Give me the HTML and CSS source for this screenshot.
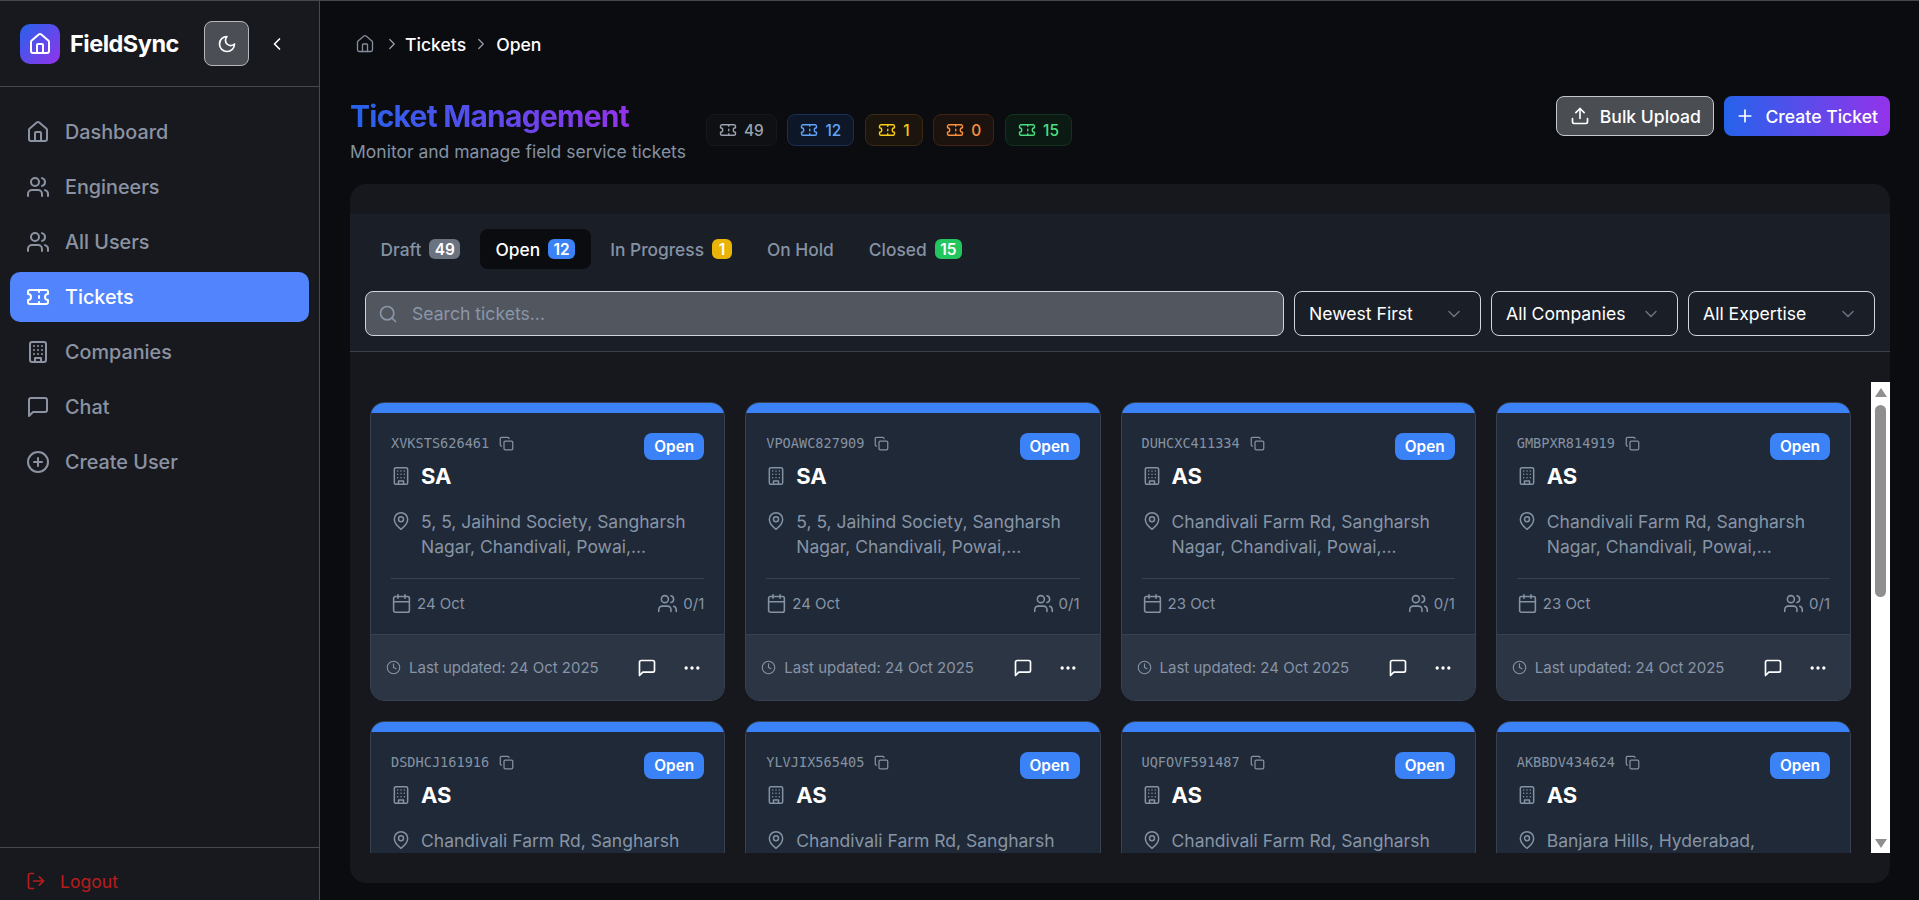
FILE: index.html
```html
<!DOCTYPE html>
<html lang="en">
<head>
    <meta charset="UTF-8">
    <meta name="viewport" content="width=device-width, initial-scale=1.0">
    <title>FieldSync - Tickets</title>
    <link rel="stylesheet" href="styles.css">
</head>
<body>

    <!-- Icon set -->
    <svg class="icon-defs" xmlns="http://www.w3.org/2000/svg">
        <symbol id="i-home" viewBox="0 0 24 24"><path d="M15 21v-8a1 1 0 0 0-1-1h-4a1 1 0 0 0-1 1v8"/><path d="M3 10a2 2 0 0 1 .709-1.528l7-5.999a2 2 0 0 1 2.582 0l7 5.999A2 2 0 0 1 21 10v9a2 2 0 0 1-2 2H5a2 2 0 0 1-2-2z"/></symbol>
        <symbol id="i-users" viewBox="0 0 24 24"><path d="M16 21v-2a4 4 0 0 0-4-4H6a4 4 0 0 0-4 4v2"/><circle cx="9" cy="7" r="4"/><path d="M22 21v-2a4 4 0 0 0-3-3.87"/><path d="M16 3.13a4 4 0 0 1 0 7.75"/></symbol>
        <symbol id="i-ticket" viewBox="0 0 24 24"><path d="M2 9a3 3 0 0 1 0 6v2a2 2 0 0 0 2 2h16a2 2 0 0 0 2-2v-2a3 3 0 0 1 0-6V7a2 2 0 0 0-2-2H4a2 2 0 0 0-2 2Z"/><path d="M13 5v2"/><path d="M13 17v2"/><path d="M13 11v2"/></symbol>
        <symbol id="i-building" viewBox="0 0 24 24"><rect width="16" height="20" x="4" y="2" rx="2"/><path d="M9 22v-4h6v4"/><path d="M8 6h.01"/><path d="M16 6h.01"/><path d="M12 6h.01"/><path d="M12 10h.01"/><path d="M12 14h.01"/><path d="M16 10h.01"/><path d="M16 14h.01"/><path d="M8 10h.01"/><path d="M8 14h.01"/></symbol>
        <symbol id="i-chat" viewBox="0 0 24 24"><path d="M21 15a2 2 0 0 1-2 2H7l-4 4V5a2 2 0 0 1 2-2h14a2 2 0 0 1 2 2z"/></symbol>
        <symbol id="i-plus-circle" viewBox="0 0 24 24"><circle cx="12" cy="12" r="10"/><path d="M8 12h8"/><path d="M12 8v8"/></symbol>
        <symbol id="i-logout" viewBox="0 0 24 24"><path d="M9 21H5a2 2 0 0 1-2-2V5a2 2 0 0 1 2-2h4"/><polyline points="16 17 21 12 16 7"/><line x1="21" x2="9" y1="12" y2="12"/></symbol>
        <symbol id="i-moon" viewBox="0 0 24 24"><path d="M12 3a6 6 0 0 0 9 9 9 9 0 1 1-9-9Z"/></symbol>
        <symbol id="i-left" viewBox="0 0 24 24"><path d="m15 18-6-6 6-6"/></symbol>
        <symbol id="i-right" viewBox="0 0 24 24"><path d="m9 18 6-6-6-6"/></symbol>
        <symbol id="i-down" viewBox="0 0 24 24"><path d="m6 9 6 6 6-6"/></symbol>
        <symbol id="i-upload" viewBox="0 0 24 24"><path d="M21 15v4a2 2 0 0 1-2 2H5a2 2 0 0 1-2-2v-4"/><polyline points="17 8 12 3 7 8"/><line x1="12" x2="12" y1="3" y2="15"/></symbol>
        <symbol id="i-plus" viewBox="0 0 24 24"><path d="M5 12h14"/><path d="M12 5v14"/></symbol>
        <symbol id="i-search" viewBox="0 0 24 24"><circle cx="11" cy="11" r="8"/><path d="m21 21-4.3-4.3"/></symbol>
        <symbol id="i-copy" viewBox="0 0 24 24"><rect width="14" height="14" x="8" y="8" rx="2"/><path d="M4 16c-1.1 0-2-.9-2-2V4c0-1.1.9-2 2-2h10c1.1 0 2 .9 2 2"/></symbol>
        <symbol id="i-pin" viewBox="0 0 24 24"><path d="M20 10c0 6-8 12-8 12s-8-6-8-12a8 8 0 0 1 16 0Z"/><circle cx="12" cy="10" r="3"/></symbol>
        <symbol id="i-calendar" viewBox="0 0 24 24"><path d="M8 2v4"/><path d="M16 2v4"/><rect width="18" height="18" x="3" y="4" rx="2"/><path d="M3 10h18"/></symbol>
        <symbol id="i-clock" viewBox="0 0 24 24"><circle cx="12" cy="12" r="10"/><polyline points="12 6 12 12 16 14"/></symbol>
        <symbol id="i-more" viewBox="0 0 24 24"><circle cx="5" cy="12" r="1"/><circle cx="12" cy="12" r="1"/><circle cx="19" cy="12" r="1"/></symbol>
    </svg>

    <aside class="sidebar">
        <div class="sidebar-head">
            <div class="logo"><svg class="icon s24"><use href="#i-home"/></svg></div>
            <span class="brand">FieldSync</span>
            <button class="theme-btn"><svg class="icon s20"><use href="#i-moon"/></svg></button>
            <button class="collapse-btn"><svg class="icon s20"><use href="#i-left"/></svg></button>
        </div>
        <nav class="side-nav">
            <a class="nav-item"><svg class="icon s24"><use href="#i-home"/></svg>Dashboard</a>
            <a class="nav-item"><svg class="icon s24"><use href="#i-users"/></svg>Engineers</a>
            <a class="nav-item"><svg class="icon s24"><use href="#i-users"/></svg>All Users</a>
            <a class="nav-item active"><svg class="icon s24"><use href="#i-ticket"/></svg>Tickets</a>
            <a class="nav-item"><svg class="icon s24"><use href="#i-building"/></svg>Companies</a>
            <a class="nav-item"><svg class="icon s24"><use href="#i-chat"/></svg>Chat</a>
            <a class="nav-item"><svg class="icon s24"><use href="#i-plus-circle"/></svg>Create User</a>
        </nav>
        <div class="sidebar-foot">
            <a class="logout"><svg class="icon s20"><use href="#i-logout"/></svg>Logout</a>
        </div>
    </aside>

    <main class="main">
        <div class="breadcrumb">
            <svg class="icon s20 crumb-home"><use href="#i-home"/></svg>
            <svg class="icon s18 crumb-sep"><use href="#i-right"/></svg>
            <span>Tickets</span>
            <svg class="icon s18 crumb-sep"><use href="#i-right"/></svg>
            <span>Open</span>
        </div>

        <div class="page-head">
            <div class="page-head-left">
                <div>
                    <h1>Ticket Management</h1>
                    <p>Monitor and manage field service tickets</p>
                </div>
                <div class="chips">
                    <span class="chip chip-gray"><svg class="icon s18"><use href="#i-ticket"/></svg>49</span>
                    <span class="chip chip-blue"><svg class="icon s18"><use href="#i-ticket"/></svg>12</span>
                    <span class="chip chip-yellow"><svg class="icon s18"><use href="#i-ticket"/></svg>1</span>
                    <span class="chip chip-orange"><svg class="icon s18"><use href="#i-ticket"/></svg>0</span>
                    <span class="chip chip-green"><svg class="icon s18"><use href="#i-ticket"/></svg>15</span>
                </div>
            </div>
            <div class="page-actions">
                <button class="btn btn-outline"><svg class="icon s20"><use href="#i-upload"/></svg>Bulk Upload</button>
                <button class="btn btn-primary"><svg class="icon s20"><use href="#i-plus"/></svg>Create Ticket</button>
            </div>
        </div>

        <section class="panel">
            <div class="panel-head">
                <div class="tabs">
                    <div class="tab">Draft <span class="count count-gray">49</span></div>
                    <div class="tab active">Open <span class="count count-blue">12</span></div>
                    <div class="tab">In Progress <span class="count count-yellow">1</span></div>
                    <div class="tab">On Hold</div>
                    <div class="tab">Closed <span class="count count-green">15</span></div>
                </div>
                <div class="filters">
                    <div class="search">
                        <svg class="icon s20"><use href="#i-search"/></svg>
                        <span>Search tickets...</span>
                    </div>
                    <div class="select">Newest First<svg class="icon s20"><use href="#i-down"/></svg></div>
                    <div class="select">All Companies<svg class="icon s20"><use href="#i-down"/></svg></div>
                    <div class="select">All Expertise<svg class="icon s20"><use href="#i-down"/></svg></div>
                </div>
            </div>

            <div class="ticket-area">
                <div class="ticket-list">
                    <div class="ticket-grid">

                        <article class="card">
                            <div class="card-strip"></div>
                            <div class="card-body">
                                <div class="card-top">
                                    <div>
                                        <div class="ticket-id">XVKSTS626461<svg class="icon s15"><use href="#i-copy"/></svg></div>
                                        <div class="ticket-company"><svg class="icon s20"><use href="#i-building"/></svg>SA</div>
                                    </div>
                                    <span class="status">Open</span>
                                </div>
                                <div class="ticket-addr"><svg class="icon s20"><use href="#i-pin"/></svg><span>5, 5, Jaihind Society, Sangharsh Nagar, Chandivali, Powai,...</span></div>
                                <div class="ticket-meta">
                                    <span><svg class="icon s21"><use href="#i-calendar"/></svg>24 Oct</span>
                                    <span><svg class="icon s21"><use href="#i-users"/></svg>0/1</span>
                                </div>
                            </div>
                            <div class="card-foot">
                                <span class="updated"><svg class="icon s15"><use href="#i-clock"/></svg>Last updated: 24 Oct 2025</span>
                                <div class="foot-actions">
                                    <button><svg class="icon s20"><use href="#i-chat"/></svg></button>
                                    <button><svg class="icon s20"><use href="#i-more"/></svg></button>
                                </div>
                            </div>
                        </article>

                        <article class="card">
                            <div class="card-strip"></div>
                            <div class="card-body">
                                <div class="card-top">
                                    <div>
                                        <div class="ticket-id">VPOAWC827909<svg class="icon s15"><use href="#i-copy"/></svg></div>
                                        <div class="ticket-company"><svg class="icon s20"><use href="#i-building"/></svg>SA</div>
                                    </div>
                                    <span class="status">Open</span>
                                </div>
                                <div class="ticket-addr"><svg class="icon s20"><use href="#i-pin"/></svg><span>5, 5, Jaihind Society, Sangharsh Nagar, Chandivali, Powai,...</span></div>
                                <div class="ticket-meta">
                                    <span><svg class="icon s21"><use href="#i-calendar"/></svg>24 Oct</span>
                                    <span><svg class="icon s21"><use href="#i-users"/></svg>0/1</span>
                                </div>
                            </div>
                            <div class="card-foot">
                                <span class="updated"><svg class="icon s15"><use href="#i-clock"/></svg>Last updated: 24 Oct 2025</span>
                                <div class="foot-actions">
                                    <button><svg class="icon s20"><use href="#i-chat"/></svg></button>
                                    <button><svg class="icon s20"><use href="#i-more"/></svg></button>
                                </div>
                            </div>
                        </article>

                        <article class="card">
                            <div class="card-strip"></div>
                            <div class="card-body">
                                <div class="card-top">
                                    <div>
                                        <div class="ticket-id">DUHCXC411334<svg class="icon s15"><use href="#i-copy"/></svg></div>
                                        <div class="ticket-company"><svg class="icon s20"><use href="#i-building"/></svg>AS</div>
                                    </div>
                                    <span class="status">Open</span>
                                </div>
                                <div class="ticket-addr"><svg class="icon s20"><use href="#i-pin"/></svg><span>Chandivali Farm Rd, Sangharsh Nagar, Chandivali, Powai,...</span></div>
                                <div class="ticket-meta">
                                    <span><svg class="icon s21"><use href="#i-calendar"/></svg>23 Oct</span>
                                    <span><svg class="icon s21"><use href="#i-users"/></svg>0/1</span>
                                </div>
                            </div>
                            <div class="card-foot">
                                <span class="updated"><svg class="icon s15"><use href="#i-clock"/></svg>Last updated: 24 Oct 2025</span>
                                <div class="foot-actions">
                                    <button><svg class="icon s20"><use href="#i-chat"/></svg></button>
                                    <button><svg class="icon s20"><use href="#i-more"/></svg></button>
                                </div>
                            </div>
                        </article>

                        <article class="card">
                            <div class="card-strip"></div>
                            <div class="card-body">
                                <div class="card-top">
                                    <div>
                                        <div class="ticket-id">GMBPXR814919<svg class="icon s15"><use href="#i-copy"/></svg></div>
                                        <div class="ticket-company"><svg class="icon s20"><use href="#i-building"/></svg>AS</div>
                                    </div>
                                    <span class="status">Open</span>
                                </div>
                                <div class="ticket-addr"><svg class="icon s20"><use href="#i-pin"/></svg><span>Chandivali Farm Rd, Sangharsh Nagar, Chandivali, Powai,...</span></div>
                                <div class="ticket-meta">
                                    <span><svg class="icon s21"><use href="#i-calendar"/></svg>23 Oct</span>
                                    <span><svg class="icon s21"><use href="#i-users"/></svg>0/1</span>
                                </div>
                            </div>
                            <div class="card-foot">
                                <span class="updated"><svg class="icon s15"><use href="#i-clock"/></svg>Last updated: 24 Oct 2025</span>
                                <div class="foot-actions">
                                    <button><svg class="icon s20"><use href="#i-chat"/></svg></button>
                                    <button><svg class="icon s20"><use href="#i-more"/></svg></button>
                                </div>
                            </div>
                        </article>

                        <article class="card">
                            <div class="card-strip"></div>
                            <div class="card-body">
                                <div class="card-top">
                                    <div>
                                        <div class="ticket-id">DSDHCJ161916<svg class="icon s15"><use href="#i-copy"/></svg></div>
                                        <div class="ticket-company"><svg class="icon s20"><use href="#i-building"/></svg>AS</div>
                                    </div>
                                    <span class="status">Open</span>
                                </div>
                                <div class="ticket-addr"><svg class="icon s20"><use href="#i-pin"/></svg><span>Chandivali Farm Rd, Sangharsh Nagar, Chandivali, Powai,...</span></div>
                            </div>
                        </article>

                        <article class="card">
                            <div class="card-strip"></div>
                            <div class="card-body">
                                <div class="card-top">
                                    <div>
                                        <div class="ticket-id">YLVJIX565405<svg class="icon s15"><use href="#i-copy"/></svg></div>
                                        <div class="ticket-company"><svg class="icon s20"><use href="#i-building"/></svg>AS</div>
                                    </div>
                                    <span class="status">Open</span>
                                </div>
                                <div class="ticket-addr"><svg class="icon s20"><use href="#i-pin"/></svg><span>Chandivali Farm Rd, Sangharsh Nagar, Chandivali, Powai,...</span></div>
                            </div>
                        </article>

                        <article class="card">
                            <div class="card-strip"></div>
                            <div class="card-body">
                                <div class="card-top">
                                    <div>
                                        <div class="ticket-id">UQFOVF591487<svg class="icon s15"><use href="#i-copy"/></svg></div>
                                        <div class="ticket-company"><svg class="icon s20"><use href="#i-building"/></svg>AS</div>
                                    </div>
                                    <span class="status">Open</span>
                                </div>
                                <div class="ticket-addr"><svg class="icon s20"><use href="#i-pin"/></svg><span>Chandivali Farm Rd, Sangharsh Nagar, Chandivali, Powai,...</span></div>
                            </div>
                        </article>

                        <article class="card">
                            <div class="card-strip"></div>
                            <div class="card-body">
                                <div class="card-top">
                                    <div>
                                        <div class="ticket-id">AKBBDV434624<svg class="icon s15"><use href="#i-copy"/></svg></div>
                                        <div class="ticket-company"><svg class="icon s20"><use href="#i-building"/></svg>AS</div>
                                    </div>
                                    <span class="status">Open</span>
                                </div>
                                <div class="ticket-addr"><svg class="icon s20"><use href="#i-pin"/></svg><span>Banjara Hills, Hyderabad,</span></div>
                            </div>
                        </article>

                    </div>
                </div>

                <div class="scrollbar">
                    <div class="arrow-up"></div>
                    <div class="thumb"></div>
                    <div class="arrow-down"></div>
                </div>
            </div>
        </section>
    </main>

</body>
</html>
```

FILE: styles.css
```css
* {
    box-sizing: border-box;
}

html, body {
    height: 100%;
}

body {
    margin: 0;
    display: flex;
    height: 900px;
    overflow: hidden;
    border-top: 1px solid #45474b;
    background: #0a0c10;
    color: #fff;
    font-family: Inter, "Noto Sans", sans-serif;
    font-size: 17.6px;
}

.icon-defs {
    display: none;
}

/* Icons take their colour from the text around them */
.icon {
    flex: none;
    fill: none;
    stroke: currentColor;
    stroke-width: 2;
    stroke-linecap: round;
    stroke-linejoin: round;
}

.s15 { width: 15px; height: 15px; }
.s18 { width: 18px; height: 18px; }
.s20 { width: 20px; height: 20px; }
.s21 { width: 21px; height: 21px; }
.s24 { width: 24px; height: 24px; }

button {
    font-family: inherit;
    cursor: pointer;
}

/* Sidebar */
.sidebar {
    width: 320px;
    flex: none;
    display: flex;
    flex-direction: column;
    background: #18191f;
    border-right: 1px solid #47494e;
}

.sidebar-head {
    height: 86px;
    flex: none;
    display: flex;
    align-items: center;
    padding: 0 20px;
    border-bottom: 1px solid #47494e;
}

.logo {
    width: 40px;
    height: 40px;
    flex: none;
    display: flex;
    align-items: center;
    justify-content: center;
    border-radius: 10px;
    background: linear-gradient(135deg, #2563eb 0%, #9333ea 100%);
}

.brand {
    margin-left: 10px;
    width: 134px;
    font-size: 23.5px;
    font-weight: 700;
    letter-spacing: -0.5px;
}

.theme-btn {
    width: 45px;
    height: 45px;
    display: flex;
    align-items: center;
    justify-content: center;
    padding: 0;
    color: #fff;
    background: #4b4e54;
    border: 1px solid #b4b7bc;
    border-radius: 8px;
}

.collapse-btn {
    width: 36px;
    height: 36px;
    margin-left: 10px;
    display: flex;
    align-items: center;
    justify-content: center;
    padding: 0;
    color: #fff;
    background: none;
    border: none;
}

.side-nav {
    flex: 1;
    display: flex;
    flex-direction: column;
    gap: 5px;
    padding: 20px 10px;
}

.nav-item {
    height: 50px;
    display: flex;
    align-items: center;
    gap: 15px;
    padding: 0 16px;
    border-radius: 10px;
    color: #8b93a3;
    font-size: 19.8px;
    font-weight: 500;
}

.nav-item.active {
    background: #5285fd;
    color: #fff;
}

.sidebar-foot {
    height: 53px;
    flex: none;
    padding: 20px 26px 0;
    border-top: 1px solid #47494e;
}

.logout {
    display: flex;
    align-items: center;
    gap: 14px;
    height: 26px;
    color: #b91c1c;
    font-size: 17.6px;
}

/* Main */
.main {
    flex: 1;
    min-width: 0;
    padding: 31px 29px 0 30px;
}

.breadcrumb {
    height: 24px;
    margin-bottom: 40px;
    display: flex;
    align-items: center;
    padding-left: 5px;
    gap: 6px;
    font-weight: 500;
}

.crumb-home {
    color: #858d9c;
    stroke-width: 1.6;
    margin-right: 2px;
}

.crumb-sep {
    color: #9aa0ab;
    stroke-width: 1.6;
    margin-right: -2px;
}

span + .crumb-sep {
    margin-right: 0;
}

.page-head {
    display: flex;
    justify-content: space-between;
    align-items: flex-start;
    margin-bottom: 20px;
}

.page-head-left {
    display: flex;
    align-items: center;
    gap: 20px;
}

h1 {
    margin: 0;
    width: fit-content;
    font-size: 30px;
    line-height: 40px;
    font-weight: 700;
    letter-spacing: -0.75px;
    background: linear-gradient(90deg, #2563eb 0%, #9333ea 100%);
    -webkit-background-clip: text;
    background-clip: text;
    color: transparent;
}

.page-head-left p {
    margin: 4px 0 0;
    line-height: 24px;
    font-size: 17.5px;
    color: #8592a3;
}

.chips {
    display: flex;
    gap: 10.8px;
}

.chip {
    height: 32px;
    display: flex;
    align-items: center;
    gap: 7px;
    padding: 0 12px;
    border: 1px solid;
    border-radius: 8px;
    font-size: 15.4px;
    font-weight: 500;
}

.chip .icon {
    stroke-width: 1.8;
}

.chip-gray { color: #9ca3af; background: #0e1014; border-color: #15181d; }
.chip-blue { color: #60a5fa; background: #0e1728; border-color: #1b2e54; }
.chip-yellow { color: #facc15; background: #1b150d; border-color: #3a2a14; }
.chip-orange { color: #fb923c; background: #1c130e; border-color: #412116; }
.chip-green { color: #4ade80; background: #0c1a14; border-color: #14331f; }

.page-actions {
    display: flex;
    gap: 10px;
}

.btn {
    height: 40px;
    display: flex;
    align-items: center;
    gap: 10px;
    padding: 0 12px 0 11.6px;
    color: #fff;
    border-radius: 8px;
    font-size: 17.6px;
    font-weight: 500;
}

.btn-outline {
    padding: 0 12px 0 13px;
    background: #4a4d52;
    border: 1px solid #c4c7cc;
}

.btn-primary {
    border: none;
    background: linear-gradient(90deg, #2563eb 0%, #9333ea 100%);
}

/* Ticket panel */
.panel {
    height: 699px;
    display: flex;
    flex-direction: column;
    padding-top: 30px;
    background: #16181d;
    border-radius: 16px;
    overflow: hidden;
}

.panel-head {
    height: 138px;
    flex: none;
    padding: 15px;
    background: #1a1e27;
    border-bottom: 1px solid #3c404a;
}

.tabs {
    display: flex;
    gap: 4px;
    margin-bottom: 22px;
}

.tab {
    height: 40px;
    display: flex;
    align-items: center;
    gap: 8px;
    padding: 0 15.5px;
    border-radius: 8px;
    color: #8592a3;
    font-size: 17.35px;
    font-weight: 500;
}

.tab.active {
    background: #0a0c10;
    color: #fff;
}

.count {
    height: 20px;
    min-width: 20px;
    display: flex;
    align-items: center;
    justify-content: center;
    padding: 0 5.5px;
    border-radius: 6px;
    color: #fff;
    font-size: 15.4px;
    font-weight: 600;
}

.count-gray { background: #6b7280; }
.count-blue { background: #3b82f6; }
.count-yellow { background: #eab308; }
.count-green { background: #22c55e; }

.filters {
    display: flex;
    gap: 10px;
}

.search {
    flex: 1;
    height: 45px;
    display: flex;
    align-items: center;
    gap: 14px;
    padding: 0 12px;
    background: #52565e;
    border: 1px solid #d1d5db;
    border-radius: 8px;
    color: #8a97a8;
}

.select {
    width: 187px;
    height: 45px;
    flex: none;
    display: flex;
    align-items: center;
    justify-content: space-between;
    padding: 0 16px 0 14px;
    border: 1px solid #d1d5db;
    border-radius: 8px;
}

.select .icon {
    color: #6b7280;
    stroke-width: 1.8;
}

.ticket-area {
    flex: 1;
    min-height: 0;
    display: flex;
    margin: 30px 0;
}

.ticket-list {
    flex: 1;
    min-width: 0;
    overflow: hidden;
}

/* Scrollbar drawn by hand, the browser hides its own in the screenshot */
.scrollbar {
    width: 19px;
    flex: none;
    display: flex;
    flex-direction: column;
    align-items: center;
    padding: 6px 0 5px;
    background: #fff;
}

.arrow-up,
.arrow-down {
    width: 0;
    height: 0;
    border-left: 6px solid transparent;
    border-right: 6px solid transparent;
}

.arrow-up {
    border-bottom: 9px solid #8f8f8f;
}

.arrow-down {
    margin-top: auto;
    border-top: 9px solid #8f8f8f;
}

.thumb {
    width: 11px;
    height: 192px;
    margin-top: 8px;
    background: #8f8f8f;
    border-radius: 6px;
}

.ticket-grid {
    display: grid;
    grid-template-columns: repeat(4, 1fr);
    gap: 20px;
    padding: 20px;
}

/* Ticket card */
.card {
    height: 299px;
    display: flex;
    flex-direction: column;
    background: #1f2937;
    border: 1px solid #374151;
    border-radius: 14px;
    overflow: hidden;
}

.card-strip {
    height: 10px;
    flex: none;
    background: #3b82f6;
}

.card-body {
    flex: 1;
    padding: 20px 20px 0;
}

.card-top {
    display: flex;
    justify-content: space-between;
    align-items: flex-start;
}

.ticket-id {
    height: 20px;
    display: flex;
    align-items: center;
    gap: 10px;
    color: #8592a3;
    font-family: "DejaVu Sans Mono", monospace;
    font-size: 13.6px;
}

.ticket-company {
    display: flex;
    align-items: center;
    gap: 10px;
    margin-top: 9px;
    line-height: 28px;
    font-size: 22px;
    font-weight: 700;
}

.ticket-company .icon,
.ticket-addr .icon,
.ticket-meta .icon,
.updated .icon {
    color: #8592a3;
    stroke-width: 1.8;
}

.status {
    height: 27px;
    width: 60px;
    display: flex;
    align-items: center;
    justify-content: center;
    background: #3b82f6;
    border-radius: 8px;
    font-size: 15.4px;
    font-weight: 600;
}

.ticket-addr {
    display: flex;
    align-items: flex-start;
    gap: 10px;
    margin-top: 19px;
    padding-bottom: 19px;
    border-bottom: 1px solid #374151;
    color: #8794a6;
    font-size: 17.5px;
    line-height: 25px;
}

.ticket-addr .icon {
    margin-top: 2px;
}

.ticket-addr span {
    height: 50px;
    overflow: hidden;
}

.ticket-meta {
    display: flex;
    justify-content: space-between;
    padding-top: 14px;
    color: #8794a6;
    font-size: 15px;
}

.ticket-meta span {
    display: flex;
    align-items: center;
    gap: 5px;
}

.card-foot {
    height: 66px;
    flex: none;
    display: flex;
    align-items: center;
    justify-content: space-between;
    padding: 0 14px 0 15px;
    background: #2c3544;
    border-top: 1px solid #374151;
}

.updated {
    display: flex;
    align-items: center;
    gap: 8px;
    color: #8794a6;
    font-size: 15px;
}

.foot-actions {
    display: flex;
    gap: 9px;
}

.foot-actions button {
    width: 36px;
    height: 36px;
    display: flex;
    align-items: center;
    justify-content: center;
    padding: 0;
    background: none;
    border: none;
    color: #fff;
}
```
